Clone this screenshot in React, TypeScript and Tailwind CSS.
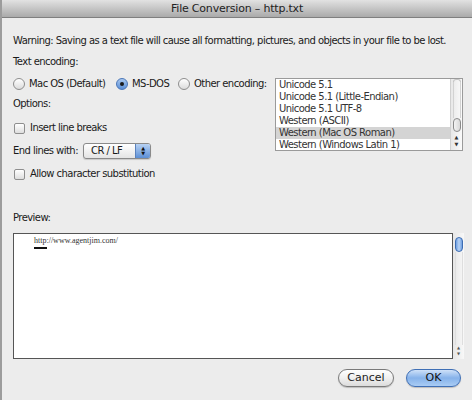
import React from "react";

const font = { fontFamily: '"DejaVu Sans", "Liberation Sans", sans-serif' };

function Radio({ checked, label, width }: { checked?: boolean; label: string; width: string }) {
    return (
        <div className={`flex items-center gap-[4px] ${width}`}>
            {checked ? (
                <span className="flex h-[12px] w-[12px] shrink-0 items-center justify-center rounded-full border border-[#4a76b8] bg-gradient-to-b from-[#a9c8ef] to-[#5b8fd6]">
                    <span className="h-[4px] w-[4px] rounded-full bg-[#1a1a1a]" />
                </span>
            ) : (
                <span className="h-[12px] w-[12px] shrink-0 rounded-full border border-[#8e8e8e] bg-gradient-to-b from-[#ffffff] to-[#dcdcdc]" />
            )}
            <span className="whitespace-nowrap">{label}</span>
        </div>
    );
}

function Checkbox({ label }: { label: string }) {
    return (
        <div className="flex h-[12px] items-center gap-[5px]">
            <span className="h-[11px] w-[11px] rounded-[2px] border border-[#8e8e8e] bg-gradient-to-b from-[#ffffff] to-[#dedede]" />
            <span>{label}</span>
        </div>
    );
}

const encodings = [
    "Unicode 5.1",
    "Unicode 5.1 (Little-Endian)",
    "Unicode 5.1 UTF-8",
    "Western (ASCII)",
    "Western (Mac OS Roman)",
    "Western (Windows Latin 1)",
];

export default function App() {
    return (
        <div
            className="flex h-[400px] w-[472px] flex-col overflow-hidden border-l-2 border-[#9c9c9c] bg-[#ececec] text-[10px] leading-[12px] tracking-[-0.55px] text-[#1a1a1a]"
            style={font}
        >
            {/* Title bar */}
            <div className="flex h-[18px] shrink-0 items-center justify-center border-b border-[#7f7f7f] bg-gradient-to-b from-[#e2e2e2] to-[#aaaaaa] text-[11px] tracking-[-0.2px] text-[#222]">
                File Conversion – http.txt
            </div>

            <div className="flex flex-1 flex-col pl-[11px] pr-[8px]">
                <p className="mt-[17px] whitespace-nowrap">
                    Warning: Saving as a text file will cause all formatting, pictures, and objects in your file to be lost.
                </p>

                <div className="flex items-start">
                    {/* Left column */}
                    <div className="flex w-[262px] flex-col">
                        <p className="mt-[9px]">Text encoding:</p>
                        <div className="mt-[10px] flex h-[12px] items-center">
                            <Radio label="Mac OS (Default)" width="w-[103px]" />
                            <Radio checked label="MS-DOS" width="w-[62px]" />
                            <Radio label="Other encoding:" width="w-[90px]" />
                        </div>
                        <p className="mt-[8px]">Options:</p>
                        <div className="mt-[12px] pl-[1px]">
                            <Checkbox label="Insert line breaks" />
                        </div>
                        <div className="mt-[9px] flex items-center gap-[5px]">
                            <span>End lines with:</span>
                            <div className="flex h-[16px] w-[68px] overflow-hidden rounded-[3px] border border-[#8a8a8a] bg-gradient-to-b from-[#ffffff] to-[#e4e4e4] shadow-[0_1px_1px_rgba(0,0,0,0.15)]">
                                <span className="flex-1 pl-[7px] leading-[14px]">CR / LF</span>
                                <span className="flex w-[15px] flex-col items-center justify-center border-l border-[#5a82bd] bg-gradient-to-b from-[#b8d2f3] to-[#5c8fd5] text-[5px] leading-[5px] text-[#111]">
                                    <span>▲</span>
                                    <span>▼</span>
                                </span>
                            </div>
                        </div>
                        <div className="mt-[9px] pl-[1px]">
                            <Checkbox label="Allow character substitution" />
                        </div>
                    </div>

                    {/* Encoding list */}
                    <div className="mt-[31px] flex h-[73px] w-[188px] border border-[#9a9a9a] bg-white">
                        <div className="flex flex-1 flex-col overflow-hidden text-[#333]">
                            {encodings.map((e) => (
                                <div
                                    key={e}
                                    className={`h-[12px] shrink-0 whitespace-nowrap pl-[3px] leading-[12px] ${e === "Western (Mac OS Roman)" ? "bg-[#d4d4d4]" : ""}`}
                                >
                                    {e}
                                </div>
                            ))}
                        </div>
                        <div className="flex w-[12px] flex-col items-center border-l border-[#d0d0d0] bg-gradient-to-r from-[#e8e8e8] to-[#fafafa]">
                            <div className="h-[3px] w-[8px] rounded-t-full border border-b-0 border-[#c4c4c4]" />
                            <div className="w-[8px] flex-1 border-x border-[#d2d2d2]" />
                            <div className="h-[14px] w-[8px] rounded-full border border-[#8a8a8a] bg-gradient-to-r from-[#f4f4f4] to-[#d8d8d8]" />
                            <div className="mb-[2px] mt-[2px] flex flex-col items-center text-[5px] leading-[7px] tracking-normal text-[#333]">
                                <span>▲</span>
                                <span>▼</span>
                            </div>
                        </div>
                    </div>
                </div>

                <p className="mt-[32px]">Preview:</p>

                {/* Preview */}
                <div className="mt-[9px] flex h-[126px]">
                    <div className="flex-1 border border-[#555] bg-white pl-[20px] pt-[2px]">
                        <p className="text-[8px] leading-[9px] tracking-normal text-[#333]" style={{ fontFamily: '"Liberation Serif", serif' }}>
                            http://www.agentjim.com/
                        </p>
                        <div className="mt-[2px] h-[2px] w-[13px] bg-[#111]" />
                    </div>
                    <div className="flex w-[11px] flex-col items-center bg-gradient-to-r from-[#e6e6e6] to-[#f8f8f8]">
                        <div className="mt-[4px] h-[15px] w-[8px] rounded-full border border-[#3d6db3] bg-gradient-to-r from-[#6f9fe0] via-[#b9d3f4] to-[#6f9fe0]" />
                        <div className="w-[8px] flex-1 border-x border-[#dedede]" />
                        <div className="mb-[2px] flex flex-col items-center text-[4px] leading-[6px] tracking-normal text-[#555]">
                            <span>▲</span>
                            <span>▼</span>
                        </div>
                    </div>
                </div>

                {/* Buttons */}
                <div className="mt-[10px] flex justify-end gap-[12px] pr-[3px]">
                    <button className="h-[18px] w-[56px] rounded-full border border-[#7a7a7a] bg-gradient-to-b from-[#ffffff] via-[#f0f0f0] to-[#dcdcdc] text-[11px] tracking-normal text-[#222] shadow-[0_1px_1px_rgba(0,0,0,0.2)]">
                        Cancel
                    </button>
                    <button className="h-[18px] w-[55px] rounded-full border border-[#3f6fb5] bg-gradient-to-b from-[#cfe1f8] via-[#86b2ea] to-[#a9ccf4] text-[11px] tracking-normal text-[#111] shadow-[0_1px_1px_rgba(0,0,0,0.2)]">
                        OK
                    </button>
                </div>
            </div>
        </div>
    );
}
